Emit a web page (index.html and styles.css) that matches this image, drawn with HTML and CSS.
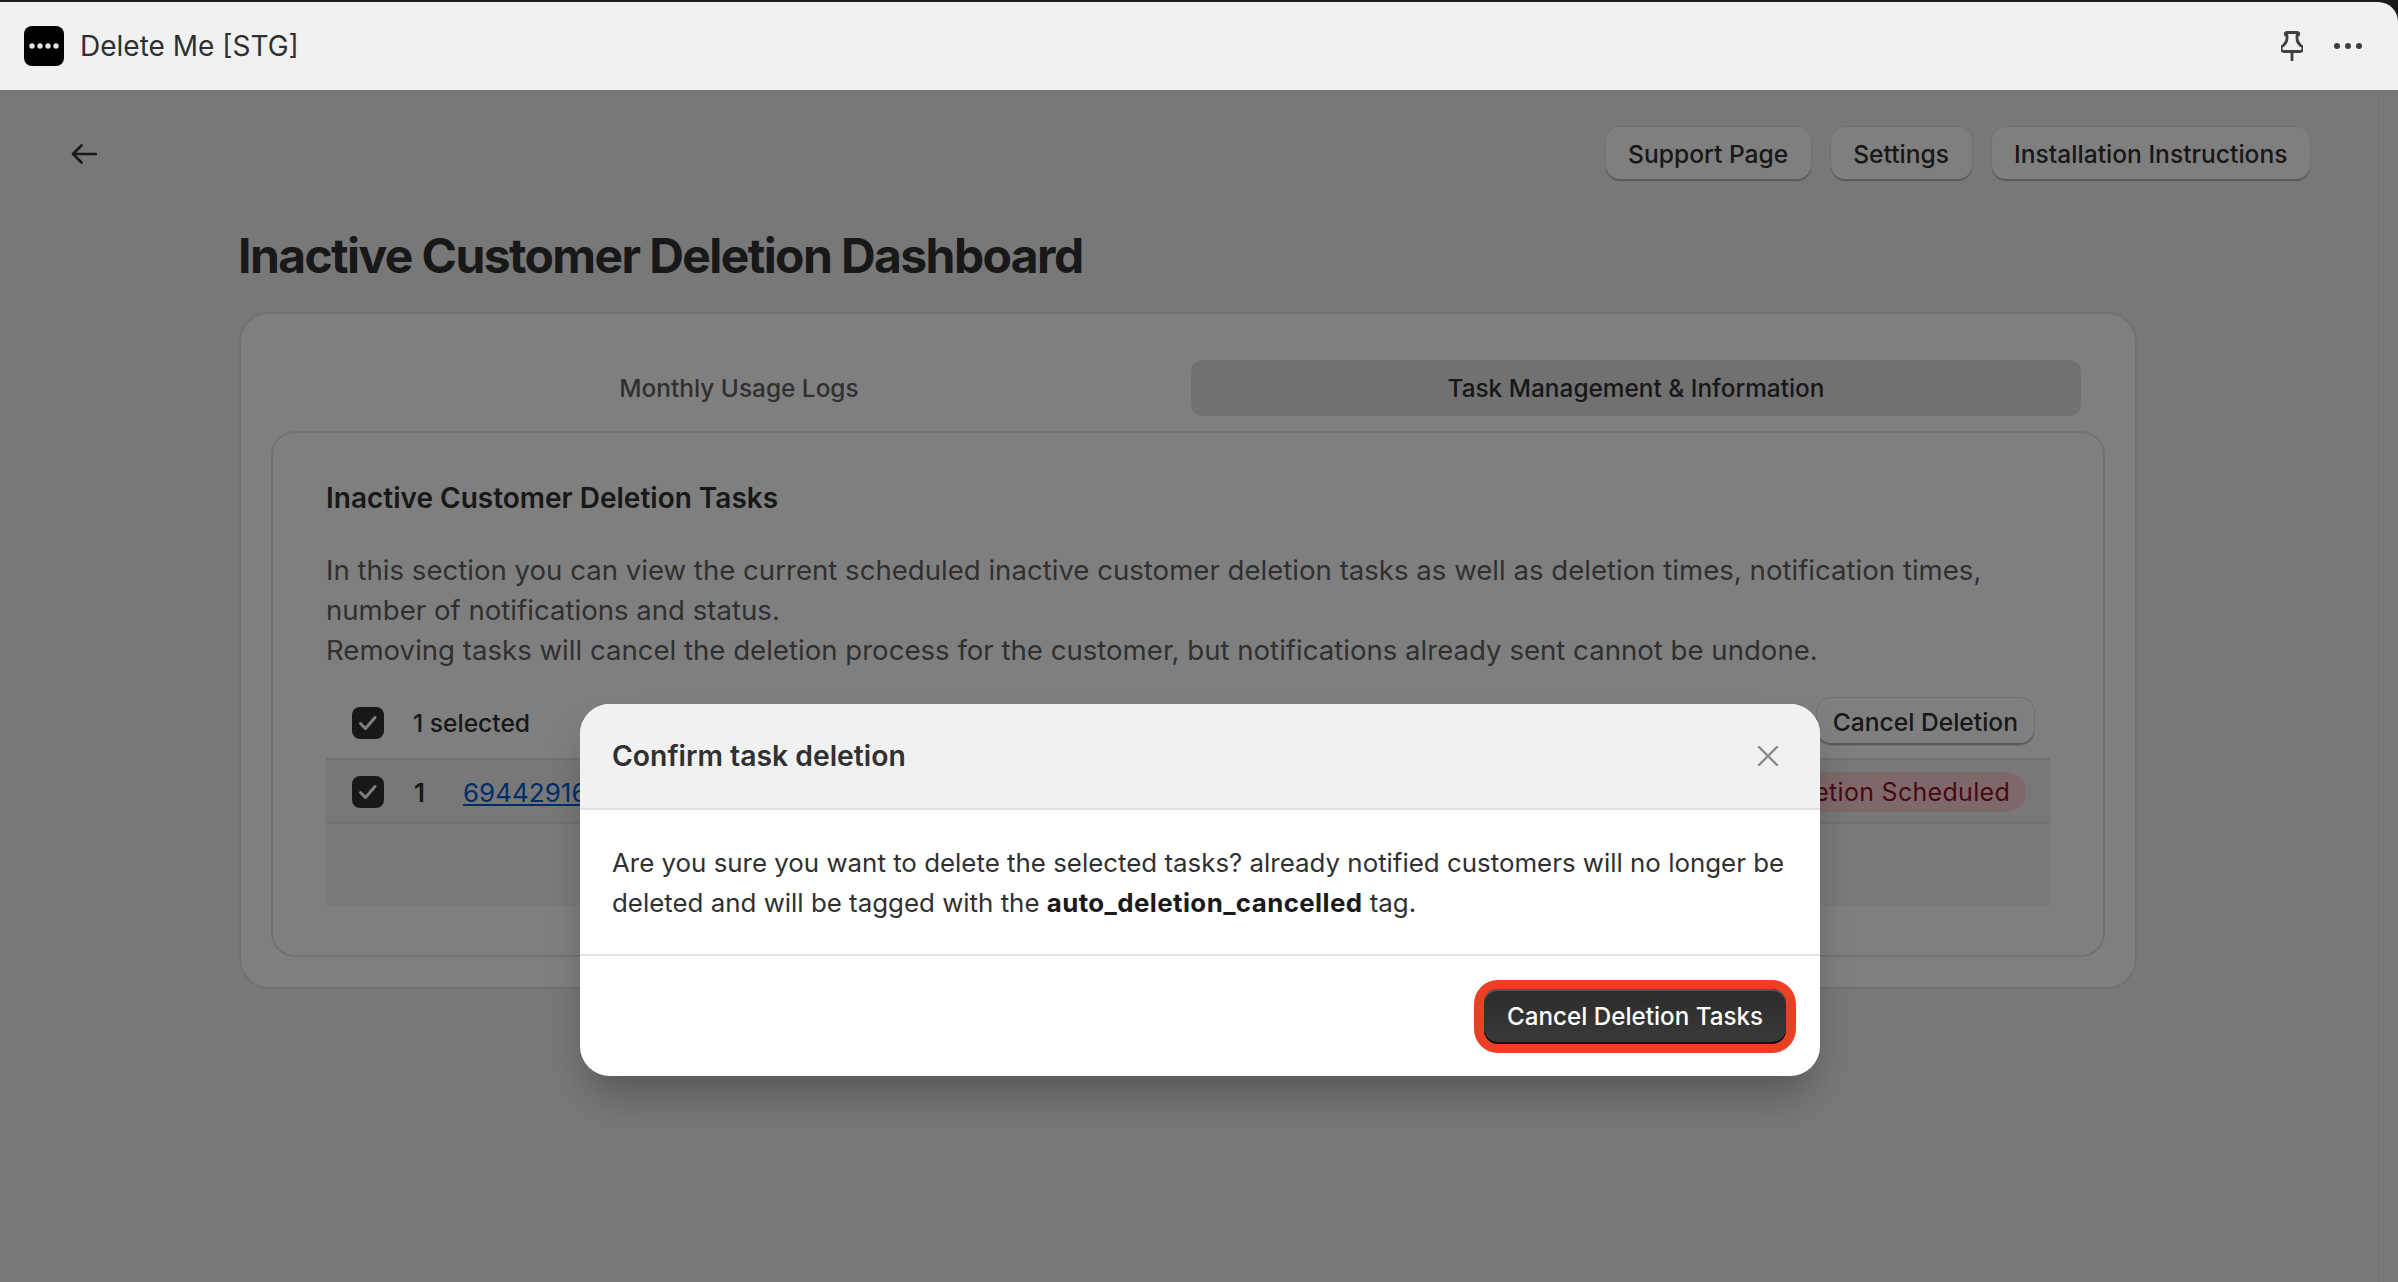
FILE: index.html
```html
<!DOCTYPE html>
<html lang="en">
<head>
<meta charset="utf-8">
<title>Delete Me [STG]</title>
<link rel="stylesheet" href="styles.css">
</head>
<body>
<header class="appbar">
  <div class="appbar-inner">
    <div class="appbar-left">
      <svg class="logo" viewBox="0 0 40 40"><rect width="40" height="40" rx="8" fill="#000"/><g fill="#e4e4e4"><circle cx="8" cy="20" r="2.700"/><circle cx="16" cy="20" r="2.700"/><circle cx="24" cy="20" r="2.700"/><circle cx="32" cy="20" r="2.700"/></g></svg>
      <span class="app-name">Delete Me [STG]</span>
    </div>
    <div class="appbar-right">
      <svg class="pin" viewBox="0 0 22 30" fill="none" stroke="#3f3f3f" stroke-width="2.800" stroke-linejoin="round" stroke-linecap="round"><path d="M6 1.500h10a1.500 1.500 0 0 1 .5 3H16v3c0 3 1.500 5 3.500 7a3 3 0 0 1-1.500 6H4a3 3 0 0 1-1.500-6C4.500 12.500 6 10.500 6 7.500v-3h-.5a1.500 1.500 0 0 1 .5-3z"/><path d="M11 21v8"/></svg>
      <svg class="dots" viewBox="0 0 28 6" fill="#3f3f3f"><circle cx="3" cy="3" r="3"/><circle cx="14" cy="3" r="3"/><circle cx="25" cy="3" r="3"/></svg>
    </div>
  </div>
</header>
<main class="page">
  <div class="toolbar">
    <svg class="back" viewBox="0 0 26 20" fill="none" stroke="#303030" stroke-width="2.600" stroke-linecap="round" stroke-linejoin="round"><path d="M25 10H2M10.500 1.500L2 10l8.500 8.500"/></svg>
    <div class="actions">
      <button class="btn">Support Page</button>
      <button class="btn">Settings</button>
      <button class="btn">Installation Instructions</button>
    </div>
  </div>
  <h1 class="title">Inactive Customer Deletion Dashboard</h1>
  <section class="card">
    <div class="tabs">
      <div class="tab">Monthly Usage Logs</div>
      <div class="tab tab-active">Task Management &amp; Information</div>
    </div>
    <div class="panel">
      <h2 class="panel-title">Inactive Customer Deletion Tasks</h2>
      <p class="panel-text">In this section you can view the current scheduled inactive customer deletion tasks as well as deletion times, notification times, number of notifications and status.<br>Removing tasks will cancel the deletion process for the customer, but notifications already sent cannot be undone.</p>
      <div class="table">
        <div class="bulk">
          <span class="check"><svg viewBox="0 0 32 32" fill="none" stroke="#fff" stroke-width="3" stroke-linecap="round" stroke-linejoin="round"><path d="M8.500 16.500l5 5 9.500-11"/></svg></span>
          <span class="bulk-label">1 selected</span>
          <button class="btn btn-bulk">Cancel Deletion</button>
        </div>
        <div class="row">
          <span class="check"><svg viewBox="0 0 32 32" fill="none" stroke="#fff" stroke-width="3" stroke-linecap="round" stroke-linejoin="round"><path d="M8.500 16.500l5 5 9.500-11"/></svg></span>
          <span class="row-num">1</span>
          <a class="row-link" href="#">6944291630</a>
          <span class="badge">Deletion Scheduled</span>
        </div>
        <div class="table-foot"></div>
      </div>
    </div>
  </section>
</main>
<div class="overlay">
  <div class="modal">
    <div class="modal-head">
      <h3 class="modal-title">Confirm task deletion</h3>
      <svg class="close" viewBox="0 0 22 22" fill="none" stroke="#8a8a8a" stroke-width="2.400" stroke-linecap="round"><path d="M2 2l18 18M20 2L2 20"/></svg>
    </div>
    <div class="modal-body">Are you sure you want to delete the selected tasks? already notified customers will no longer be deleted and will be tagged with the <strong>auto_deletion_cancelled</strong> tag.</div>
    <div class="modal-foot">
      <span class="highlight"><button class="btn-primary">Cancel Deletion Tasks</button></span>
    </div>
  </div>
</div>
</body>
</html>
```
FILE: styles.css
```css
* { box-sizing: border-box; }
html, body { margin: 0; height: 100%; }
body {
  position: relative;
  height: 1282px;
  overflow: hidden;
  background: #f1f1f1;
  font-family: Inter, "Liberation Sans", sans-serif;
  color: #303030;
  font-size: 26px;
}
button { font-family: inherit; }
.appbar {
  position: relative;
  z-index: 3;
  height: 90px;
  background: #1a1a1a;
  padding-top: 2px;
}
.appbar-inner {
  height: 88px;
  background: #f1f1f1;
  border-top-right-radius: 20px;
  display: flex;
  align-items: center;
  justify-content: space-between;
  padding: 0 36px 0 24px;
}
.appbar-left { display: flex; align-items: center; gap: 16px; }
.logo { width: 40px; height: 40px; display: block; }
.app-name { font-size: 28px; color: #303030; }
.appbar-right { display: flex; align-items: center; gap: 31px; }
.pin { width: 22px; height: 30px; display: block; }
.dots { width: 28px; height: 6px; display: block; }
.page {
  width: 2379px;
  height: 1192px;
  border-right: 1px solid #e3e3e3;
  padding: 37px 68px 0 71px;
}
.toolbar { display: flex; justify-content: space-between; align-items: center; height: 54px; }
.back { width: 26px; height: 20px; display: block; }
.actions { display: flex; gap: 20px; }
.btn {
  height: 54px;
  padding: 0 22.500px;
  border: 0;
  border-radius: 14px;
  background: #fff;
  color: #303030;
  font-size: 24.600px;
  font-weight: 500;
  box-shadow: inset 0 -2px 0 #b5b5b5, 0 0 0 1px #e3e3e3;
}
.title {
  margin: 45px 0 26px 167px;
  font-size: 48px;
  line-height: 60px;
  font-weight: 700;
  letter-spacing: -1.600px;
  color: #303030;
}
.card {
  margin-left: 168px;
  width: 1898px;
  height: 677px;
  background: #fff;
  border: 2px solid #e3e3e3;
  border-radius: 30px;
  padding: 46px 30px 30px;
}
.tabs { display: grid; grid-template-columns: 890px 890px; gap: 7px; margin: 0 22px 0 23px; }
.tab { height: 56px; border-radius: 12px; display: flex; align-items: center; justify-content: center; font-size: 24.400px; font-weight: 500; color: #616161; }
.tab-active { background: #e3e3e3; color: #303030; }
.panel {
  margin-top: 15px;
  height: 526px;
  border: 2px solid #e3e3e3;
  border-radius: 24px;
  padding: 47px 53px 0 53px;
}
.panel-title { margin: 0; font-size: 28px; line-height: 36px; font-weight: 600; color: #303030; }
.panel-text { margin: 34px 0 0; font-size: 27.600px; line-height: 40px; color: #616161; }
.table { margin-top: 18px; }
.bulk { height: 70px; display: flex; align-items: center; padding-left: 26px; position: relative; }
.check { width: 32px; height: 32px; border-radius: 8px; background: #303030; display: block; flex: none; }
.check svg { display: block; width: 32px; height: 32px; }
.bulk-label { margin-left: 29px; font-size: 24.600px; font-weight: 500; }
.btn-bulk { position: absolute; right: 16px; top: 10px; height: 47px; padding: 0 16px; }
.row { height: 66px; display: flex; align-items: center; padding: 2px 0 0 26px; background: #f1f1f1; border-top: 2px solid #e3e3e3; border-bottom: 2px solid #e3e3e3; }
.row-num { margin-left: 30px; font-size: 26px; font-weight: 600; }
.row-link { margin-left: 38px; font-size: 26px; color: #005bd3; text-decoration: underline; }
.badge { margin-left: auto; margin-right: 24px; height: 40px; padding: 0 16px; border-radius: 20px; background: #ffd0d4; color: #8e1028; font-size: 25px; letter-spacing: .3px; display: flex; align-items: center; }
.table-foot { height: 82px; background: #f5f5f5; }
.overlay {
  position: absolute;
  z-index: 2;
  inset: 0;
  background: rgba(0, 0, 0, .5);
}
.modal {
  position: absolute;
  left: 580px;
  top: 704px;
  width: 1240px;
  height: 372px;
  background: #fff;
  border-radius: 30px;
  overflow: hidden;
  display: flex;
  flex-direction: column;
  box-shadow: 0 26px 40px -8px rgba(0, 0, 0, .28);
}
.modal-head { height: 106px; flex: none; background: #f1f1f1; border-bottom: 2px solid #e3e3e3; display: flex; align-items: center; justify-content: space-between; padding: 0 41px 0 32px; }
.modal-title { margin: 0; font-size: 28.300px; font-weight: 600; color: #303030; }
.close { width: 22px; height: 22px; display: block; }
.modal-body { height: 146px; flex: none; padding: 33px 20px 0 32px; font-size: 25.880px; line-height: 40px; color: #303030; border-bottom: 2px solid #e3e3e3; }
.modal-body strong { color: #1a1a1a; font-weight: 700; letter-spacing: .4px; }
.modal-foot { flex: 1; display: flex; align-items: center; justify-content: flex-end; padding-right: 24px; }
.highlight { display: block; padding: 9px 10px; background: #ec4025; border-radius: 24px; }
.btn-primary { display: block; width: 302px; height: 55px; border: 0; border-radius: 14px; background: linear-gradient(#2b2b2b, #3a3a3a); color: #fff; font-size: 24.200px; font-weight: 500; box-shadow: inset 0 2px 0 #555, inset 0 -2px 0 #111; }
```
